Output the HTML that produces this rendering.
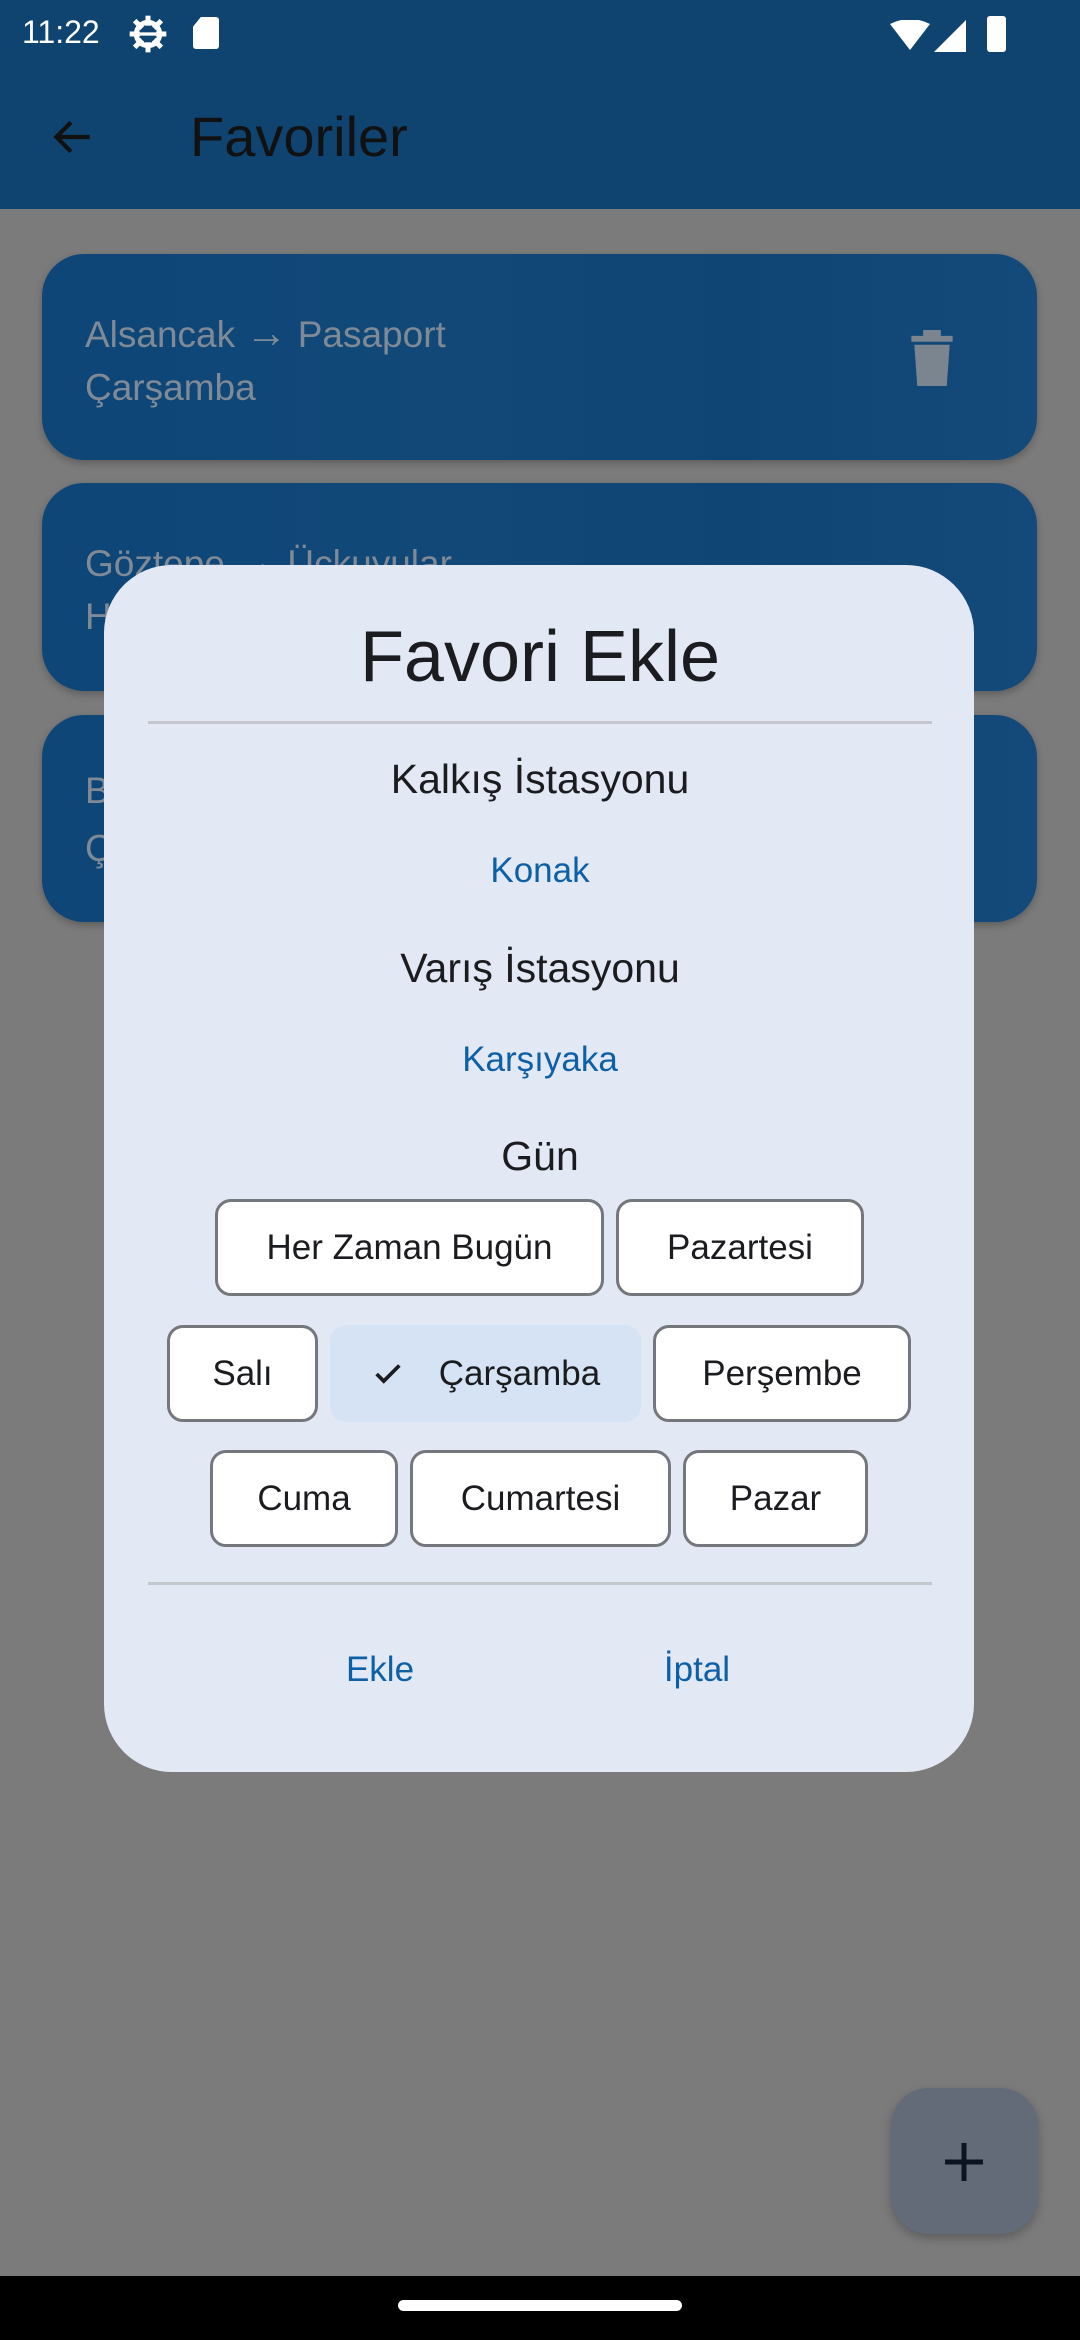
<!DOCTYPE html>
<html><head><meta charset="utf-8"><style>
*{margin:0;padding:0;box-sizing:border-box}
body{width:1080px;height:2340px;position:relative;overflow:hidden;background:#7b7b7b;font-family:"Liberation Sans",sans-serif}
.abs{position:absolute}
.c{position:absolute;left:0;right:0;text-align:center;line-height:1}
.card{position:absolute;left:42px;width:995px;border-radius:42px;background:linear-gradient(90deg,#0d4677,#114878 40%,#0f4575 70%,#134a7a);box-shadow:0 3px 8px rgba(0,0,0,.25);overflow:hidden}
.card .t{position:absolute;left:43px;color:#7f8a96;font-size:37px}
.chip{position:absolute;height:97px;border:3px solid #74777c;border-radius:16px;background:#fff;color:#1b1c1f;font-size:35px;display:flex;align-items:center;justify-content:center}
</style></head><body>
<div class="abs" style="left:0;top:0;width:1080px;height:209px;background:#0e446f"></div>
<div class="abs" style="left:22px;top:14px;color:#fff;font-size:32px">11:22</div>
<svg class="abs" style="left:128px;top:14px" width="40" height="40" viewBox="0 0 24 24"><circle cx="12" cy="12" r="7" fill="none" stroke="#fff" stroke-width="3"/><g stroke="#fff" stroke-width="3"><line x1="12" y1="1" x2="12" y2="23"/><line x1="1" y1="12" x2="23" y2="12"/><line x1="4" y1="4" x2="20" y2="20"/><line x1="20" y1="4" x2="4" y2="20"/></g><circle cx="12" cy="12" r="5" fill="#0e446f"/><line x1="7" y1="12" x2="17" y2="12" stroke="#fff" stroke-width="2"/></svg>
<div class="abs" style="left:193px;top:17px;width:26px;height:32px;background:#fff;border-radius:3px;clip-path:polygon(30% 0,100% 0,100% 100%,0 100%,0 30%)"></div>
<svg class="abs" style="left:890px;top:20px" width="40" height="30" viewBox="0 0 40 30"><path d="M0 4 Q20 -6 40 4 L20 30 Z" fill="#fff"/></svg>
<svg class="abs" style="left:934px;top:20px" width="32" height="32"><path d="M32 0 V32 H0 Z" fill="#fff"/></svg>
<div class="abs" style="left:987px;top:16px;width:19px;height:36px;background:#fff;border-radius:3px"></div>
<svg class="abs" style="left:48px;top:112px" width="50" height="50" viewBox="0 0 24 24"><path d="M20 12H5M11 5l-7 7 7 7" fill="none" stroke="#111" stroke-width="2"/></svg>
<div class="abs" style="left:190px;top:104px;font-size:56px;color:#111">Favoriler</div>

<div class="card" style="top:254px;height:206px">
<div class="t" style="top:55px">Alsancak <span style="font-size:42px">→</span> Pasaport</div>
<div class="t" style="top:113px">Çarşamba</div>
<svg class="abs" style="left:866px;top:76px" width="48" height="56" viewBox="0 0 16 19"><path d="M1 2h14v2H1zM5 0h6v2H5zM2 5h12l-1 14H3z" fill="#7b8590"/></svg>
</div>
<div class="card" style="top:483px;height:208px">
<div class="t" style="top:55px">Göztepe <span style="font-size:42px">→</span> Üçkuyular</div>
<div class="t" style="top:113px">Her Zaman</div>
</div>
<div class="card" style="top:715px;height:207px">
<div class="t" style="top:55px">Bornova</div>
<div class="t" style="top:113px">Çarşamba</div>
</div>

<div class="abs" style="left:104px;top:565px;width:870px;height:1207px;background:#e2e9f4;border-radius:68px"></div>
<div class="c" style="top:621px;font-size:72px;color:#1b1c1f">Favori Ekle</div>
<div class="abs" style="left:148px;top:721px;width:784px;height:3px;background:#c4c8ce"></div>
<div class="c" style="top:759px;font-size:41px;color:#1b1c1f">Kalkış İstasyonu</div>
<div class="c" style="top:853px;font-size:35px;color:#0d5fa6;font-weight:500">Konak</div>
<div class="c" style="top:948px;font-size:41px;color:#1b1c1f">Varış İstasyonu</div>
<div class="c" style="top:1042px;font-size:35px;color:#0d5fa6">Karşıyaka</div>
<div class="c" style="top:1136px;font-size:41px;color:#1b1c1f">Gün</div>

<div class="chip" style="left:215px;top:1199px;width:389px">Her Zaman Bugün</div>
<div class="chip" style="left:616px;top:1199px;width:248px">Pazartesi</div>
<div class="chip" style="left:167px;top:1325px;width:151px">Salı</div>
<div class="chip" style="left:330px;top:1325px;width:311px;border:none;background:#d6e3f5">
<svg width="34" height="34" viewBox="0 0 24 24" style="margin-right:34px"><path d="M4 12l5 5L20 6" fill="none" stroke="#1b1c1f" stroke-width="2.6"/></svg>Çarşamba</div>
<div class="chip" style="left:653px;top:1325px;width:258px">Perşembe</div>
<div class="chip" style="left:210px;top:1450px;width:188px">Cuma</div>
<div class="chip" style="left:410px;top:1450px;width:261px">Cumartesi</div>
<div class="chip" style="left:683px;top:1450px;width:185px">Pazar</div>

<div class="abs" style="left:148px;top:1582px;width:784px;height:3px;background:#c4c8ce"></div>
<div class="abs" style="left:280px;width:200px;top:1650px;text-align:center;font-size:35px;color:#0d5fa6">Ekle</div>
<div class="abs" style="left:597px;width:200px;top:1650px;text-align:center;font-size:35px;color:#0d5fa6">İptal</div>

<div class="abs" style="left:891px;top:2088px;width:147px;height:146px;border-radius:38px;background:#636b78;box-shadow:0 4px 10px rgba(0,0,0,.25)"></div>
<svg class="abs" style="left:945px;top:2143px" width="38" height="38"><path d="M19 0V38M0 19H38" stroke="#0b1420" stroke-width="5"/></svg>
<div class="abs" style="left:0;top:2276px;width:1080px;height:64px;background:#000"></div>
<div class="abs" style="left:398px;top:2300px;width:284px;height:11px;border-radius:6px;background:#fff"></div>
</body></html>
